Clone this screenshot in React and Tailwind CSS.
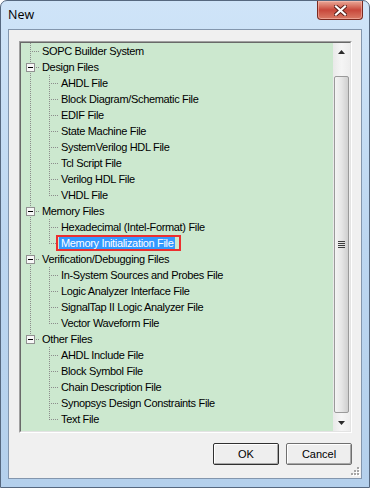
import React from 'react'

const tree = [
  { label: 'SOPC Builder System' },
  { label: 'Design Files', children: ['AHDL File', 'Block Diagram/Schematic File', 'EDIF File', 'State Machine File', 'SystemVerilog HDL File', 'Tcl Script File', 'Verilog HDL File', 'VHDL File'] },
  { label: 'Memory Files', children: ['Hexadecimal (Intel-Format) File', 'Memory Initialization File'] },
  { label: 'Verification/Debugging Files', children: ['In-System Sources and Probes File', 'Logic Analyzer Interface File', 'SignalTap II Logic Analyzer File', 'Vector Waveform File'] },
  { label: 'Other Files', children: ['AHDL Include File', 'Block Symbol File', 'Chain Description File', 'Synopsys Design Constraints File', 'Text File'] },
]

const SELECTED = 'Memory Initialization File'
const DOT = '#8c8c8c'

// one 19x16 cell of tree lines: pipe | tee | elbow | blank, optional [-] box
function Cell({ kind, box }) {
  return (
    <svg width="19" height="16" className="shrink-0" shapeRendering="crispEdges">
      {(kind === 'pipe' || kind === 'tee') && (
        <line x1="9.5" y1="0" x2="9.5" y2="16" stroke={DOT} strokeDasharray="1 1" />
      )}
      {kind === 'elbow' && (
        <line x1="9.5" y1="0" x2="9.5" y2="9" stroke={DOT} strokeDasharray="1 1" />
      )}
      {(kind === 'tee' || kind === 'elbow') && (
        <line x1="11" y1="8.5" x2="19" y2="8.5" stroke={DOT} strokeDasharray="1 1" />
      )}
      {box && (
        <g>
          <rect x="5.5" y="4.5" width="8" height="8" fill="#f7f7f7" stroke="#919191" />
          <line x1="7" y1="8.5" x2="12" y2="8.5" stroke="#000" />
        </g>
      )}
    </svg>
  )
}

function Row({ cells, label }) {
  const sel = label === SELECTED
  return (
    <div className="flex h-4 items-center">
      {cells.map((c, i) => <Cell key={i} {...c} />)}
      {sel ? (
        <span className="ml-[-3px] flex h-4 items-center border-2 border-[#ec2f2f] pl-px pr-1">
          <span className="bg-[#3399ff] px-[2px] leading-[12px] text-white">{label}</span>
        </span>
      ) : (
        <span className="pl-[2px] leading-4 text-black">{label}</span>
      )}
    </div>
  )
}

function Tree() {
  const rows = []
  tree.forEach((node, i) => {
    const last = i === tree.length - 1
    rows.push(<Row key={node.label} label={node.label} cells={[{ kind: last ? 'elbow' : 'tee', box: !!node.children }]} />)
    ;(node.children || []).forEach((c, j) => {
      const lastChild = j === node.children.length - 1
      rows.push(
        <Row key={c} label={c} cells={[{ kind: last ? 'blank' : 'pipe' }, { kind: lastChild ? 'elbow' : 'tee' }]} />
      )
    })
  })
  return <div className="flex flex-col">{rows}</div>
}

function Arrow({ up }) {
  return (
    <svg width="7" height="4" viewBox="0 0 7 4">
      <polygon points={up ? '3.5,0 7,4 0,4' : '0,0 7,0 3.5,4'} fill="#2b2b2b" />
    </svg>
  )
}

function Scrollbar() {
  return (
    <div className="flex w-[17px] shrink-0 flex-col bg-gradient-to-r from-[#e9e9e9] via-[#f5f5f5] to-[#ededed]">
      <div className="flex h-[17px] items-center justify-center"><Arrow up /></div>
      <div className="h-[16px]" />
      <div className="mx-px mb-px flex flex-1 items-center justify-center rounded-[2px] border border-[#9a9a9a] bg-gradient-to-r from-[#f4f4f4] via-[#e6e6e6] to-[#cfcfcf]">
        <div className="flex flex-col gap-px">
          {[0, 1, 2, 3].map(i => (
            <div key={i} className="h-px w-[7px] bg-[#3d3d3d]" />
          ))}
        </div>
      </div>
      <div className="flex h-[17px] items-center justify-center"><Arrow /></div>
    </div>
  )
}

function Button({ children, def }) {
  return (
    <button
      className={`h-[22px] w-[66px] rounded-[2px] border bg-[#eeeeee] text-[11px] text-black shadow-[inset_1px_1px_0_#ffffff,inset_-1px_-1px_0_#a8a8a8] ${
        def ? 'border-[#303030]' : 'border-[#6f6f6f]'
      }`}
    >
      {children}
    </button>
  )
}

function CloseButton() {
  return (
    <div className="flex h-[19px] w-[46px] items-center justify-center rounded-b-[4px] border border-t-0 border-[#7b2a20] bg-gradient-to-b from-[#e9a898] via-[#c8473b] to-[#d97a66] shadow-[inset_0_0_0_1px_rgba(255,200,190,0.5)]">
      <svg width="13" height="11" viewBox="0 0 13 11">
        <path d="M2 1.5 L11 9.5 M11 1.5 L2 9.5" stroke="#5a1e18" strokeWidth="4" strokeLinecap="square" />
        <path d="M2 1.5 L11 9.5 M11 1.5 L2 9.5" stroke="#ffffff" strokeWidth="2.2" strokeLinecap="square" />
      </svg>
    </div>
  )
}

export default function App() {
  return (
    <div
      className="flex h-[488px] w-[370px] flex-col rounded-t-[7px] border border-[#56687f] bg-gradient-to-b from-[#cfe4f8] via-[#bcd6f0] to-[#b4d0ec]"
      style={{ fontFamily: '"Liberation Sans", Arial, sans-serif' }}
    >
      <div className="flex h-[28px] shrink-0 items-start justify-between">
        <span
          className="pl-[7px] pt-[6px] text-[12.5px] leading-4 text-black"
          style={{ fontFamily: '"Open Sans", "Noto Sans", sans-serif' }}
        >
          New
        </span>
        <div className="mr-[6px]"><CloseButton /></div>
      </div>

      <div className="relative mx-[7px] mb-[8px] flex flex-1 flex-col border border-[#8396ad] bg-[#f0f0f0] pb-[13px] pl-[10px] pr-[9px] pt-[11px]">
        <div className="flex flex-1 border border-b-white border-l-[#a0a0a0] border-r-white border-t-[#a0a0a0]">
          <div className="flex flex-1 overflow-hidden border border-b-[#e3e3e3] border-l-[#696969] border-r-[#e3e3e3] border-t-[#696969]">
            <div className="flex-1 bg-[#cce8cf] text-[11px] tracking-[-0.33px]">
              <Tree />
            </div>
            <Scrollbar />
          </div>
        </div>

        <div className="mt-[10px] flex justify-end gap-[7px]">
          <Button def>OK</Button>
          <Button>Cancel</Button>
        </div>

        <svg className="absolute bottom-[1px] right-[1px]" width="11" height="11" viewBox="0 0 11 11">
          {[[9, 1], [9, 4], [6, 4], [9, 7], [6, 7], [3, 7]].map(([x, y], i) => (
            <g key={i}>
              <rect x={x} y={y + 1} width="2" height="2" fill="#ffffff" />
              <rect x={x - 1} y={y} width="2" height="2" fill="#a5a5a5" />
            </g>
          ))}
        </svg>
      </div>
    </div>
  )
}
